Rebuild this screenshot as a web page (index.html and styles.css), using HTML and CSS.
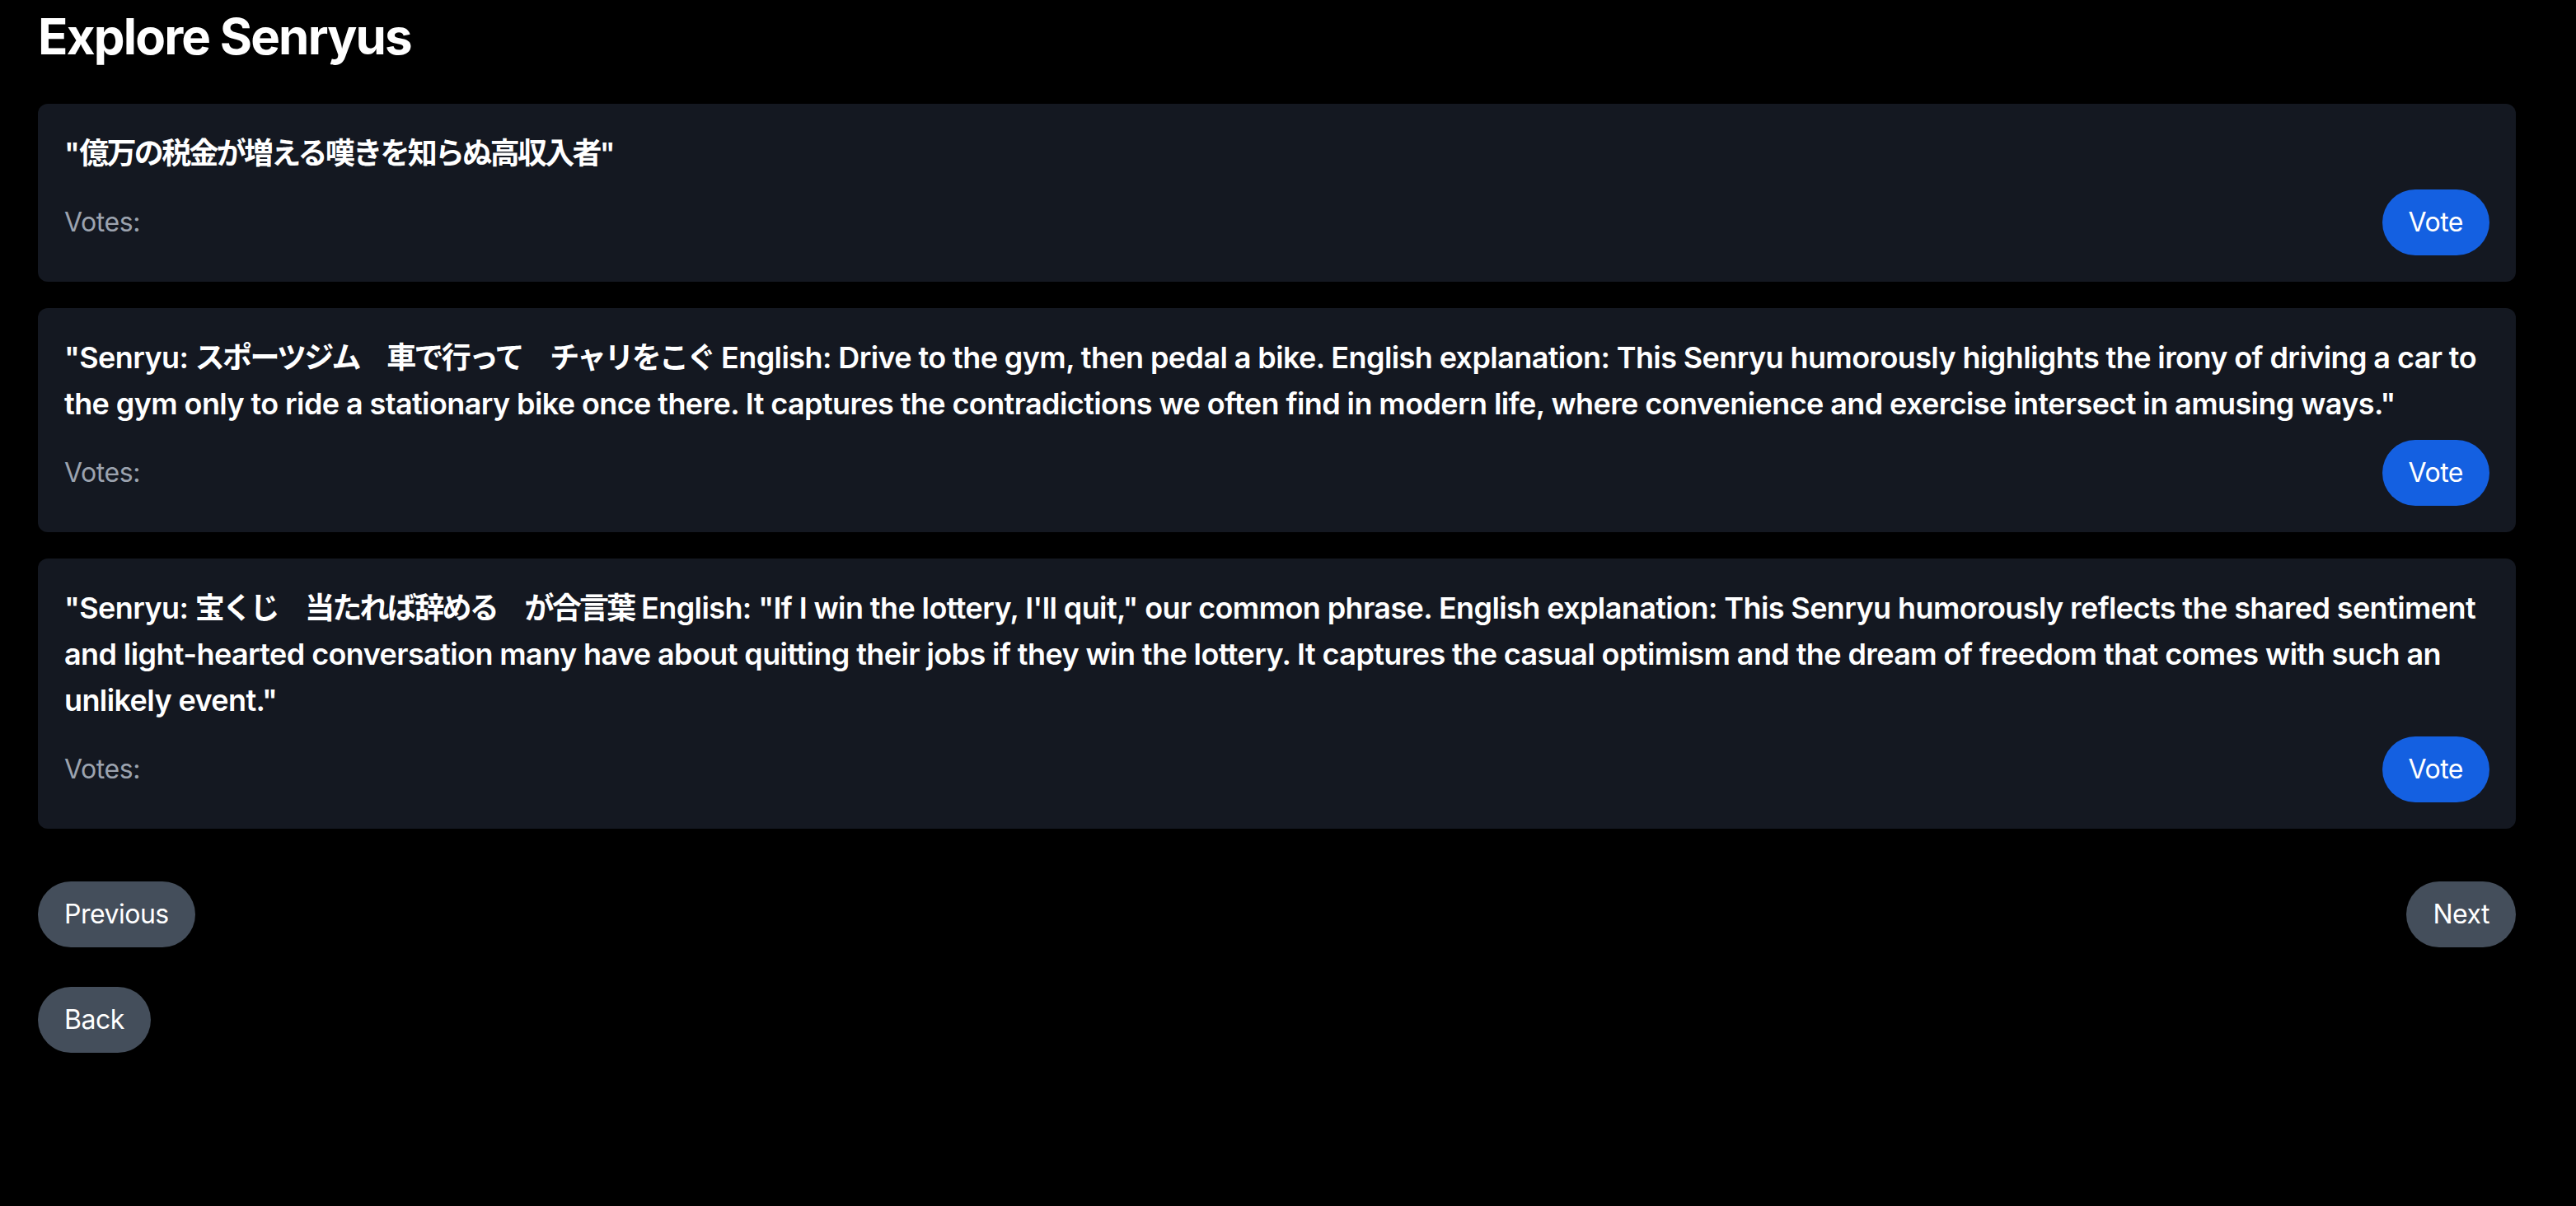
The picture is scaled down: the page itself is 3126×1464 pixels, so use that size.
FILE: index.html
```html
<!DOCTYPE html>
<html lang="ja">
<head>
<meta charset="utf-8">
<title>Explore Senryus</title>
<link rel="stylesheet" href="styles.css">
</head>
<body>
<main class="page">
  <h1 class="title">Explore Senryus</h1>
  <section class="list">
    <article class="card">
      <p class="quote">"<span class="ja">億万の税金が増える嘆きを知らぬ高収入者</span>"</p>
      <div class="card-foot">
        <span class="votes">Votes:</span>
        <button class="btn btn-vote">Vote</button>
      </div>
    </article>
    <article class="card">
      <p class="quote">"Senryu: <span class="ja">スポーツジム　車で行って　チャリをこぐ</span> English: Drive to the gym, then pedal a bike. English explanation: This Senryu humorously highlights the irony of driving a car to the gym only to ride a stationary bike once there. It captures the contradictions we often find in modern life, where convenience and exercise intersect in amusing ways."</p>
      <div class="card-foot">
        <span class="votes">Votes:</span>
        <button class="btn btn-vote">Vote</button>
      </div>
    </article>
    <article class="card">
      <p class="quote">"Senryu: <span class="ja">宝くじ　当たれば辞める　が合言葉</span> English: "If I win the lottery, I'll quit," our common phrase. English explanation: This Senryu humorously reflects the shared sentiment and light-hearted conversation many have about quitting their jobs if they win the lottery. It captures the casual optimism and the dream of freedom that comes with such an unlikely event."</p>
      <div class="card-foot">
        <span class="votes">Votes:</span>
        <button class="btn btn-vote">Vote</button>
      </div>
    </article>
  </section>
  <nav class="pager">
    <button class="btn btn-gray">Previous</button>
    <button class="btn btn-gray">Next</button>
  </nav>
  <div class="back-row">
    <button class="btn btn-gray">Back</button>
  </div>
</main>
</body>
</html>
```

FILE: styles.css
```css
html, body {
  margin: 0;
  padding: 0;
  background: #000;
}
body {
  color: #fff;
  font-family: "Inter", "Noto Sans CJK JP", sans-serif;
}
.page {
  padding: 8px 73px 40px 46px;
}
.title {
  margin: 0 0 46px 0;
  font-size: 60px;
  line-height: 72px;
  font-weight: 700;
  letter-spacing: -1.8px;
}
.list {
  display: flex;
  flex-direction: column;
  gap: 32px;
}
.card {
  background: #141821;
  border-radius: 12px;
  padding: 32px;
}
.quote {
  margin: 0;
  font-size: 36px;
  line-height: 56px;
  font-weight: 600;
  letter-spacing: -0.6px;
}
.ja {
  letter-spacing: -2.7px;
}
.card-foot {
  margin-top: 16px;
  display: flex;
  justify-content: space-between;
  align-items: center;
}
.votes {
  color: #9ca3af;
  font-size: 32px;
  line-height: 48px;
  letter-spacing: -0.4px;
}
.btn {
  border: none;
  border-radius: 9999px;
  padding: 16px 32px;
  font-family: inherit;
  font-size: 32px;
  line-height: 48px;
  letter-spacing: -0.5px;
  color: #fff;
  cursor: pointer;
}
.btn-vote {
  background: #1460e1;
}
.btn-gray {
  background: #444e5b;
}
.pager {
  margin-top: 64px;
  display: flex;
  justify-content: space-between;
}
.back-row {
  margin-top: 48px;
  display: flex;
}
```
